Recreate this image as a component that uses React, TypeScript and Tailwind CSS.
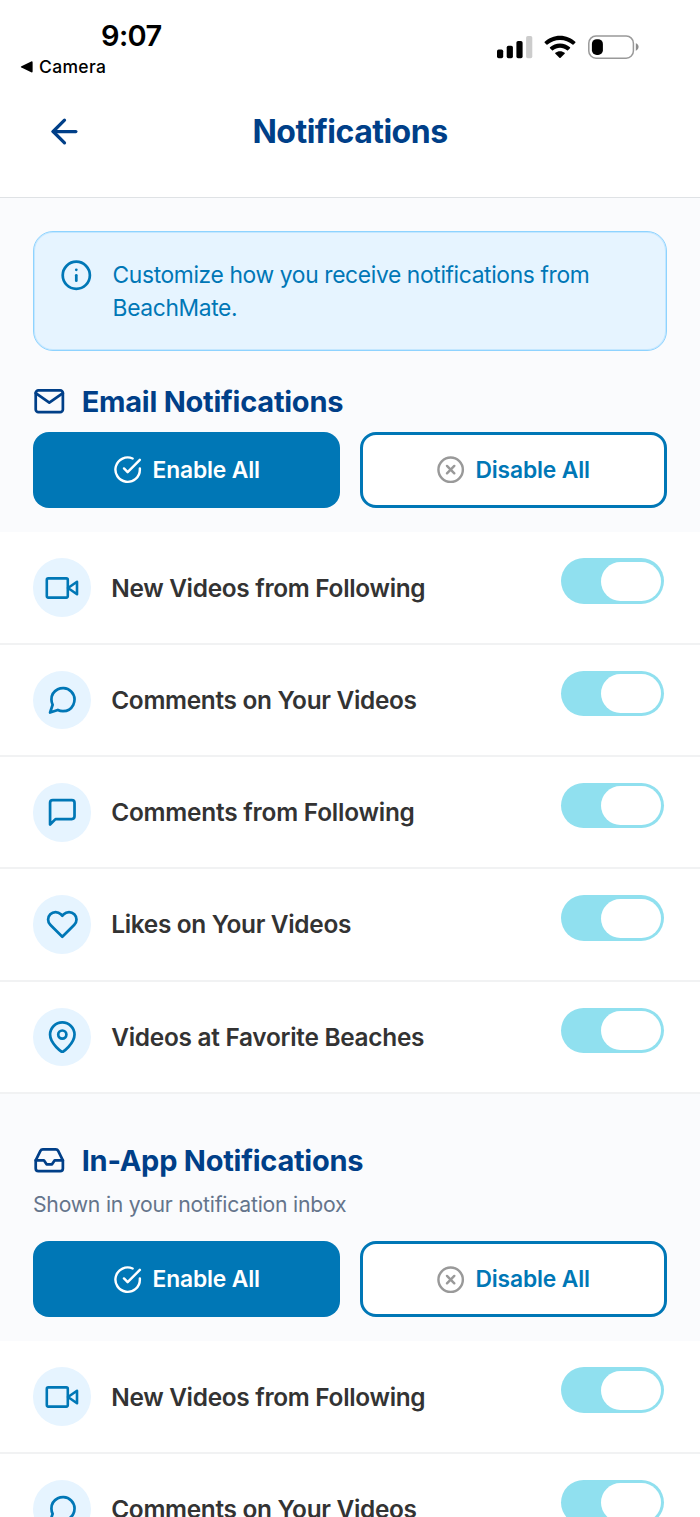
import React from "react";
import {
  FiArrowLeft,
  FiCheckCircle,
  FiHeart,
  FiInbox,
  FiInfo,
  FiMail,
  FiMapPin,
  FiMessageCircle,
  FiMessageSquare,
  FiXCircle,
} from "react-icons/fi";

type Icon = React.ComponentType<{ size?: number }>;

interface Setting {
  label: string;
  icon: Icon;
  tracking: string;
}

// squarer corners than the Feather camera
function VideoIcon() {
  return (
    <svg
      width="34"
      height="24"
      viewBox="0 0 34 24"
      fill="none"
      stroke="currentColor"
      strokeWidth="2.6"
      strokeLinecap="round"
      strokeLinejoin="round"
    >
      <rect x="1.8" y="2.4" width="21" height="19.2" rx="1.5" />
      <path d="M32 5.8 23 12 32 18.2Z" />
    </svg>
  );
}

const SETTINGS: Setting[] = [
  { label: "New Videos from Following", icon: VideoIcon, tracking: "tracking-[-0.3px]" },
  { label: "Comments on Your Videos", icon: FiMessageCircle, tracking: "tracking-[-0.31px]" },
  { label: "Comments from Following", icon: FiMessageSquare, tracking: "tracking-[-0.21px]" },
  { label: "Likes on Your Videos", icon: FiHeart, tracking: "tracking-[-0.31px]" },
  { label: "Videos at Favorite Beaches", icon: FiMapPin, tracking: "tracking-[-0.27px]" },
];

function StatusBar() {
  return (
    <div className="flex h-[88px] justify-between pl-5 pr-[61px] text-black">
      <div className="pt-[18px]">
        <div className="pl-[81px] text-[29px] font-semibold leading-9 tracking-[-0.6px]">9:07</div>
        <div className="flex items-center gap-[6px] pt-[2px]">
          <svg width="13" height="12" viewBox="0 0 13 12" fill="currentColor">
            <path d="M1.4 5.2 11.2.5Q12.6 0 12.6 1.4V10.4Q12.6 11.8 11.2 11.3L1.4 6.6Q0 5.9 1.4 5.2Z" />
          </svg>
          <span className="text-[17.5px] font-medium leading-[22px] tracking-[0.35px]">Camera</span>
        </div>
      </div>
      <div className="flex h-6 items-center mt-[35px]">
        <svg width="36" height="24" viewBox="0 0 36 24" fill="currentColor">
          <rect x="0" y="14.5" width="6.2" height="8.7" rx="1.7" />
          <rect x="9.7" y="10.8" width="6.2" height="12.4" rx="1.7" />
          <rect x="19.4" y="6" width="6.2" height="17.2" rx="1.7" />
          <rect x="29.1" y="1" width="6.2" height="22.2" rx="1.7" fill="#cccccc" />
        </svg>
        <svg className="ml-[11px]" width="32" height="24" viewBox="0 0 32 24" fill="currentColor">
          <path d="M16 .7C22 .7 27.3 3 31.3 6.8Q31.8 7.3 31.3 7.8L29.5 9.6Q29 10.1 28.5 9.6C25.2 6.5 20.8 4.9 16 4.9S6.8 6.5 3.5 9.6Q3 10.1 2.5 9.6L.7 7.8Q.2 7.3.7 6.8C4.7 3 10 .7 16 .7Z" />
          <path d="M16 8.5C19.9 8.5 23.3 9.9 26 12.3Q26.5 12.8 26 13.3L24 15.2Q23.5 15.7 23 15.2C21.1 13.6 18.7 12.7 16 12.7S10.9 13.6 9 15.2Q8.5 15.7 8 15.2L6 13.3Q5.5 12.8 6 12.3C8.7 9.9 12.1 8.5 16 8.5Z" />
          <path d="M16 16.2C17.8 16.2 19.4 16.8 20.6 17.8Q21.1 18.3 20.6 18.8L16.6 22.8Q16 23.3 15.4 22.8L11.4 18.8Q10.9 18.3 11.4 17.8C12.6 16.8 14.2 16.2 16 16.2Z" />
        </svg>
        <svg className="ml-[12px]" width="51" height="24" viewBox="0 0 51 24">
          <rect x="0.8" y="1" width="44.6" height="22.2" rx="7.2" fill="none" stroke="#999999" strokeWidth="1.5" />
          <rect x="3.9" y="4.2" width="11" height="15.8" rx="4.8" fill="#000000" />
          <path d="M47.8 8.2Q50.6 9.2 50.6 12.1T47.8 16Z" fill="#8c8c8c" />
        </svg>
      </div>
    </div>
  );
}

function Toggle() {
  return (
    <button
      role="switch"
      aria-checked="true"
      className="mr-[3px] flex h-[45.5px] w-[103px] shrink-0 items-center justify-end self-start rounded-full bg-[#90e0ef] pr-[3.3px]"
    >
      <span className="h-[39px] w-[60.5px] rounded-full bg-white" />
    </button>
  );
}

function BulkActions() {
  return (
    <div className="grid grid-cols-2 gap-[20px] px-[33px] text-[22.8px] font-semibold tracking-[-0.15px]">
      <button className="flex h-[76px] items-center justify-center gap-[10px] rounded-[16px] bg-[#0077b6] text-white">
        <FiCheckCircle size={29.3} />
        <span>Enable All</span>
      </button>
      <button className="flex h-[76px] items-center justify-center gap-[10px] rounded-[16px] border-3 border-[#0077b6] bg-white pr-px text-[#0077b6]">
        <FiXCircle size={29.3} className="text-[#999999]" />
        <span>Disable All</span>
      </button>
    </div>
  );
}

function SectionTitle({ icon: Icon, title }: { icon: Icon; title: string }) {
  return (
    <div className="flex h-10 items-center gap-[16.5px] px-[32.6px] text-[#003f88]">
      <Icon size={32.6} />
      <h2 className="text-[29px] font-bold tracking-[-0.25px]">{title}</h2>
    </div>
  );
}

function SettingsList() {
  return (
    <div className="bg-white">
      {SETTINGS.map(({ label, icon: Icon, tracking }) => (
        <div
          key={label}
          className="flex h-[112.3px] items-center border-b-2 border-[#f1f2f3] px-[32.6px] pt-[26px] pb-[25.7px]"
        >
          <div className="flex size-[58.6px] shrink-0 items-center justify-center rounded-full bg-[#e6f4ff] text-[#0077b6]">
            <Icon size={32.6} />
          </div>
          <span
            className={`flex-1 whitespace-nowrap pt-[0.4px] pl-[20px] text-[24.4px] font-semibold text-[#333333] ${tracking}`}
          >
            {label}
          </span>
          <Toggle />
        </div>
      ))}
    </div>
  );
}

export default function App() {
  return (
    <div className="h-[1517px] w-[700px] overflow-hidden bg-[#fafbfd] font-['Inter',sans-serif]">
      <header className="h-[198px] border-b border-[#dfe2e5] bg-white">
        <StatusBar />
        <div className="grid h-[87px] grid-cols-[1fr_auto_1fr] items-center px-[45.3px] text-[#003f88]">
          <FiArrowLeft size={39} />
          <h1 className="text-[32px] font-bold tracking-[-0.5px]">Notifications</h1>
          <span />
        </div>
      </header>

      <div className="mx-[33px] mt-[33px] flex h-[120px] gap-[19.6px] rounded-[20px] border border-[#8ed3ff] bg-[#e6f4ff] px-[26.4px] pt-[27px] text-[#0077b6] shadow-[inset_0_0_0_1px_#c4e7ff]">
        <FiInfo size={32.6} className="shrink-0" />
        <p className="text-[22.8px] leading-[32.5px] tracking-[-0.36px]">
          Customize how you receive notifications from
          <br />
          BeachMate.
        </p>
      </div>

      <section className="pt-[30.5px]">
        <SectionTitle icon={FiMail} title="Email Notifications" />
        <div className="pt-[10.5px] pb-[24.4px]">
          <BulkActions />
        </div>
        <SettingsList />
      </section>

      <section className="pt-[46.5px]">
        <SectionTitle icon={FiInbox} title="In-App Notifications" />
        <p className="px-[33px] pt-[8px] text-[21.2px] leading-8 tracking-[-0.23px] text-[#64748b]">
          Shown in your notification inbox
        </p>
        <div className="pt-[21px] pb-6">
          <BulkActions />
        </div>
        <SettingsList />
      </section>
    </div>
  );
}
